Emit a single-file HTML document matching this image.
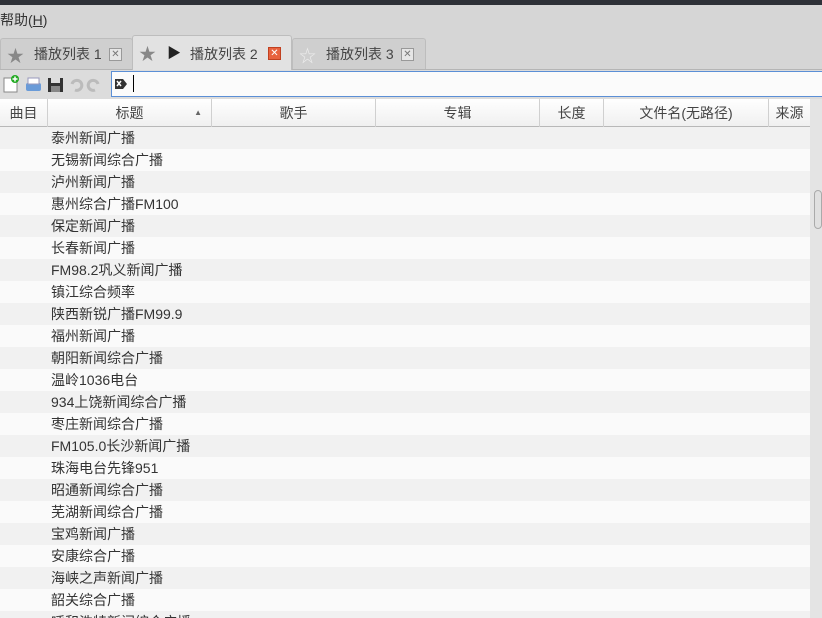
<!DOCTYPE html>
<html style="overflow:hidden;width:822px;height:618px"><head><meta charset="utf-8"><style>
*{margin:0;padding:0;box-sizing:border-box}
body{width:822px;height:618px;overflow:hidden;background:#d6d6d6;font-family:"Liberation Sans","Noto Sans CJK SC",sans-serif;font-size:14px;color:#333;position:relative}
.abs{position:absolute}
.tab{position:absolute;border:1px solid #bdbdbd;border-bottom:none;border-radius:3px 3px 0 0;background:#cfcfcf;display:flex;align-items:center;font-size:14px;color:#444}
.x{width:13px;height:13px;border:1px solid #999;background:#e6e6e6;color:#777;font-size:10px;line-height:11px;text-align:center;position:absolute}
.hd{position:absolute;top:99px;height:28px;border-right:1px solid #d0d0d0;text-align:center;line-height:28px;font-size:14px;color:#444}
.row{position:absolute;left:0;width:810px;height:22px;line-height:22px;padding-left:51px;font-size:14px;color:#333}
</style></head><body>
<div class="abs" style="left:0;top:0;width:822px;height:5px;background:#2e3138"></div>
<div class="abs" style="left:0;top:10px;font-size:14px;color:#333">帮助(<u>H</u>)</div>
<div class="abs" style="left:0;top:69px;width:822px;height:1px;background:#b5b5b5"></div>
<div class="tab" style="left:0;top:38px;width:133px;height:31px"><span class="abs" style="left:6px;top:3px;font-size:17px;color:#888">★</span><span class="abs" style="left:33px;top:5px">播放列表 1</span><span class="x" style="left:108px;top:9px">✕</span></div>
<div class="tab" style="left:132px;top:35px;width:160px;height:35px;background:#e2e2e2"><span class="abs" style="left:6px;top:4px;font-size:17px;color:#888">★</span><span class="abs" style="left:34px;top:7px;font-size:14px;color:#222">▶</span><span class="abs" style="left:57px;top:8px">播放列表 2</span><span class="x" style="left:135px;top:11px;background:#e8623e;border-color:#c04020;color:#fff">✕</span></div>
<div class="tab" style="left:292px;top:38px;width:134px;height:31px"><span class="abs" style="left:6px;top:3px;font-size:17px;color:#eee">☆</span><span class="abs" style="left:33px;top:5px">播放列表 3</span><span class="x" style="left:108px;top:9px">✕</span></div>
<div class="abs" style="left:0;top:70px;width:822px;height:29px;background:#dcdcdc"></div>
<svg class="abs" style="left:2px;top:74px" width="108" height="20">
<path d="M2 4h10l3 3v11H2z" fill="#fff" stroke="#888"/><circle cx="13" cy="5" r="4" fill="#2a2"/><path d="M13 2.5v5M10.5 5h5" stroke="#fff" stroke-width="1.5"/>
<rect x="24" y="9" width="15" height="8" rx="2" fill="#6a9bd8"/><rect x="26" y="4" width="11" height="6" fill="#fff" stroke="#99b"/>
<rect x="46" y="4" width="15" height="14" fill="#333"/><rect x="49" y="4" width="9" height="5" fill="#ddd"/><rect x="49" y="12" width="9" height="6" fill="#888"/>
<path d="M70 10a5 5 0 1 1 3 6" stroke="#bbb" stroke-width="3" fill="none"/><path d="M96 10a5 5 0 1 0-3 6" stroke="#bbb" stroke-width="3" fill="none"/>
</svg>
<div class="abs" style="left:111px;top:71px;width:711px;height:26px;background:#fbfbfb;border:1px solid #5b8fd6;border-right:none"></div>
<svg class="abs" style="left:114px;top:78px" width="14" height="12"><path d="M1 1h8l4 5-4 5H1z" fill="#333"/><path d="M3 3l4 5M7 3l-4 5" stroke="#fff" stroke-width="1.5"/></svg>
<div class="abs" style="left:133px;top:75px;width:1px;height:17px;background:#000"></div>
<div class="abs" style="left:0;top:99px;width:810px;height:519px;background:#fafafa"></div>
<div class="abs" style="left:0;top:99px;width:810px;height:28px;background:linear-gradient(#fff,#f0f0f0);border-bottom:1px solid #b8b8b8"></div>
<div class="hd" style="left:0;width:48px">曲目</div>
<div class="hd" style="left:48px;width:164px">标题<span style="position:absolute;right:9px;top:0;font-size:8px;color:#666">▲</span></div>
<div class="hd" style="left:212px;width:164px">歌手</div>
<div class="hd" style="left:376px;width:164px">专辑</div>
<div class="hd" style="left:540px;width:64px">长度</div>
<div class="hd" style="left:604px;width:165px">文件名(无路径)</div>
<div class="hd" style="left:769px;width:41px;border-right:none">来源</div>
<div class="abs" style="left:810px;top:99px;width:12px;height:519px;background:#e4e4e4"></div>
<div class="abs" style="left:814px;top:190px;width:8px;height:39px;border:1px solid #aaa;border-radius:4px;background:#e0e0e0"></div>
<div class="abs" style="left:0;top:0;width:822px;height:618px;overflow:hidden;pointer-events:none"><div id="rows"></div></div>
<script>
var t=["泰州新闻广播","无锡新闻综合广播","泸州新闻广播","惠州综合广播FM100","保定新闻广播","长春新闻广播","FM98.2巩义新闻广播","镇江综合频率","陕西新锐广播FM99.9","福州新闻广播","朝阳新闻综合广播","温岭1036电台","934上饶新闻综合广播","枣庄新闻综合广播","FM105.0长沙新闻广播","珠海电台先锋951","昭通新闻综合广播","芜湖新闻综合广播","宝鸡新闻广播","安康综合广播","海峡之声新闻广播","韶关综合广播","呼和浩特新闻综合广播"];
var h="";for(var i=0;i<t.length;i++){h+='<div class="row" style="top:'+(127+22*i)+'px;background:'+(i%2==0?'#f1f1f1':'#fafafa')+'">'+t[i]+'</div>';}
document.getElementById('rows').innerHTML=h;
</script>
</body></html>
